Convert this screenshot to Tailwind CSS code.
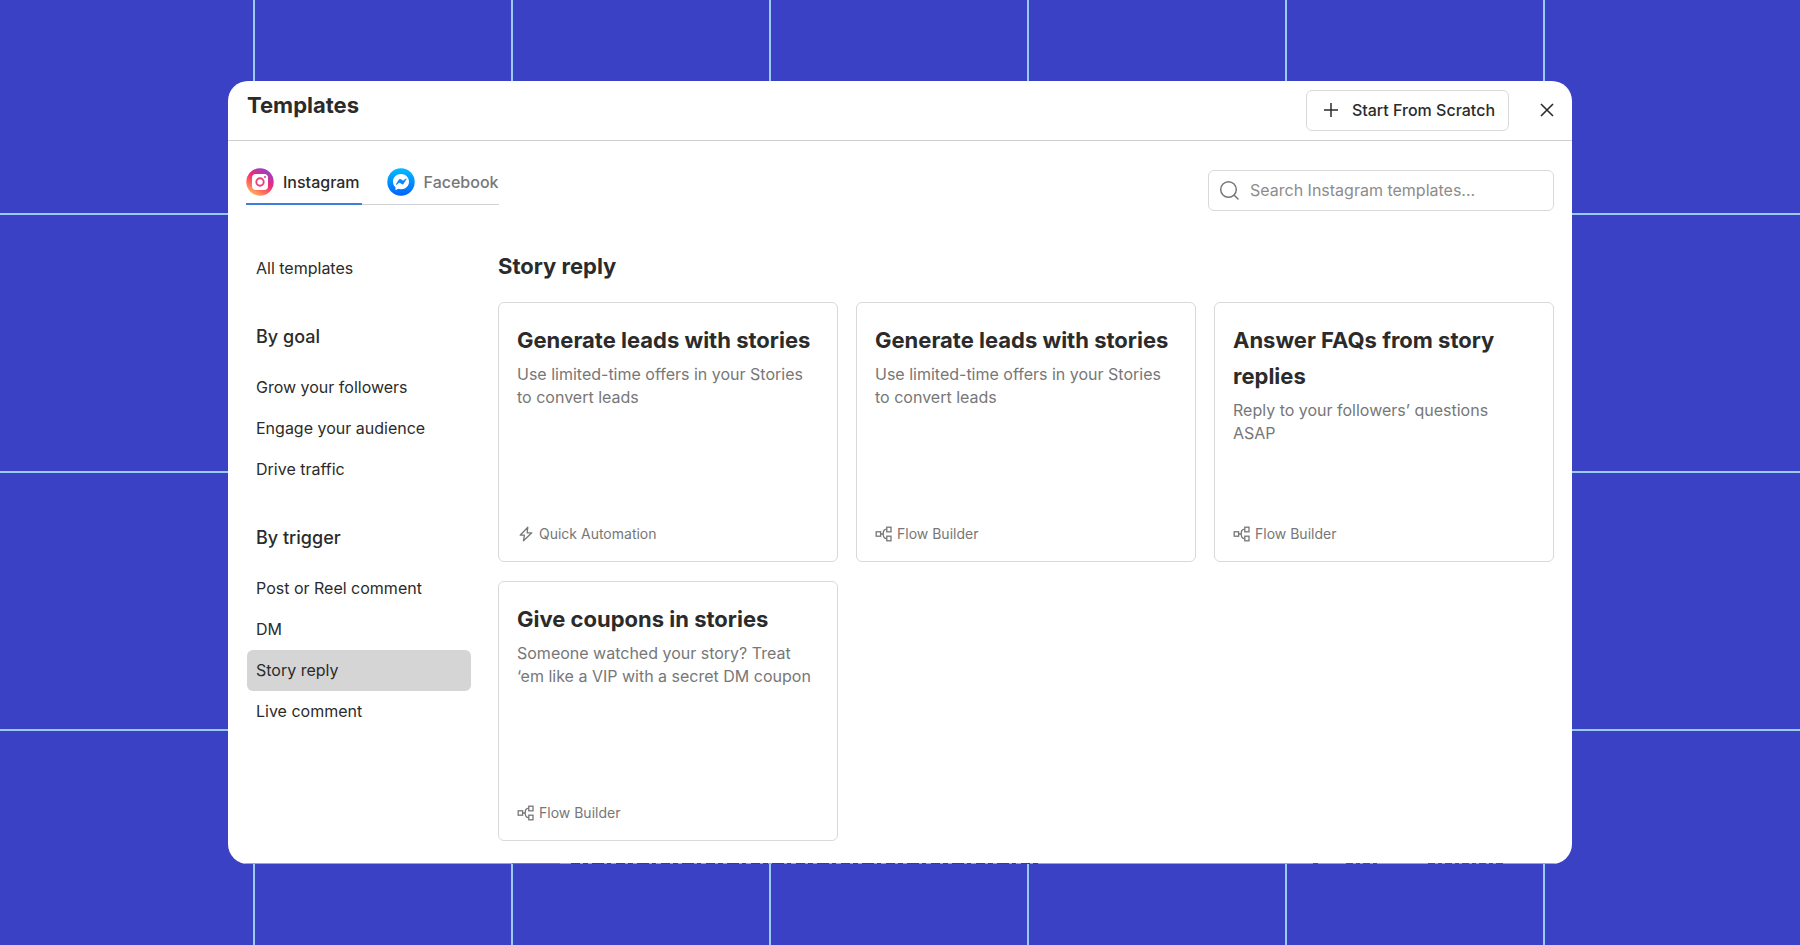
<!DOCTYPE html>
<html lang="en">
<head>
  <meta charset="UTF-8">
  <meta name="viewport" content="width=device-width, initial-scale=1.0">
  <title>Templates</title>
  <script src="https://cdn.jsdelivr.net/npm/@tailwindcss/browser@4"></script>
</head>
<body class="min-h-screen bg-[#3b41c5] bg-[linear-gradient(#98cbf2_2px,transparent_2px),linear-gradient(90deg,#98cbf2_2px,transparent_2px)] bg-[size:258px_258px] bg-[position:0_213px,253px_0] px-[228px] py-[81px] font-['Inter',sans-serif] text-[#2b2b2b]">

  <!-- Shared icon shapes -->
  <svg class="hidden">
    <symbol id="icon-flow" viewBox="0 0 18 16" fill="none" stroke="currentColor" stroke-width="1.3">
      <rect x="1.2" y="5.8" width="4.4" height="4.4" />
      <rect x="11.8" y="1.2" width="4.2" height="4.6" />
      <rect x="11.8" y="10.2" width="4.2" height="4.6" />
      <path d="M5.6 8h2.6M11.8 3.2C9 3.2 8.2 5 8.2 8s.8 4.6 3.6 4.6" />
    </symbol>
    <symbol id="icon-bolt" viewBox="0 0 18 16" fill="none" stroke="currentColor" stroke-width="1.3" stroke-linejoin="round">
      <path d="M10.800 1.200 3.200 9.200h4.200l-.9 5.600 8.300-8h-4.600z" />
    </symbol>
  </svg>

  <div role="dialog" aria-labelledby="dialog-title" class="relative min-h-[783px] overflow-hidden rounded-[20px] bg-white">
    <!-- Header -->
    <header class="flex h-15 items-center justify-between border-b border-[#cfcfd2] pl-[19px] pr-[15px]">
      <h1 id="dialog-title" class="pb-3 text-[22px] leading-9 font-bold">Templates</h1>
      <div class="flex items-center gap-7 pb-px">
        <button type="button" class="flex h-[41px] items-center gap-3 rounded-md border border-[#d9d9d9] px-[13px] text-base font-medium">
          <svg class="size-5" viewBox="0 0 20 20" fill="none" stroke="currentColor" stroke-width="1.5"><path d="M11 3v14M4 10h14" /></svg>
          Start From Scratch
        </button>
        <button type="button" aria-label="Close">
          <svg class="size-5" viewBox="0 0 20 20" fill="none" stroke="currentColor" stroke-width="1.6"><path d="m4 4 12 12M16 4 4 16" /></svg>
        </button>
      </div>
    </header>

    <!-- Channel tabs and search -->
    <div class="flex items-start justify-between px-[18px] pt-[27px]">
      <nav class="flex gap-[25px] border-b border-[#d0d2d6] text-base font-medium">
        <a href="#instagram" class="-mb-px flex items-center gap-[9px] border-b-2 border-[#3f7fdb] pb-[7px]">
          <svg class="size-7" viewBox="0 0 28 28" fill="none">
            <defs>
              <linearGradient id="ig" x1="5" y1="26" x2="20" y2="2" gradientUnits="userSpaceOnUse">
                <stop stop-color="#ffb861" />
                <stop offset=".3" stop-color="#ff6a5c" />
                <stop offset=".6" stop-color="#ee2a7b" />
                <stop offset="1" stop-color="#9a3fc0" />
              </linearGradient>
            </defs>
            <circle cx="14" cy="14" r="13.7" fill="url(#ig)" />
            <rect x="6" y="6" width="16" height="16" rx="4" fill="#fff" />
            <circle cx="14" cy="14" r="3.7" stroke="#ee3f78" stroke-width="1.9" />
            <circle cx="19" cy="9" r="1" fill="#d63b95" />
          </svg>
          <span class="pr-[2px]">Instagram</span>
        </a>
        <a href="#facebook" class="flex items-center gap-[9px] pb-2 text-[#777]">
          <svg class="size-7" viewBox="0 0 28 28">
            <defs>
              <linearGradient id="ms" x1="0" y1="0" x2="0" y2="1">
                <stop stop-color="#00bdff" />
                <stop offset="1" stop-color="#0064ff" />
              </linearGradient>
            </defs>
            <circle cx="14" cy="14" r="13.7" fill="url(#ms)" />
            <path fill="#fff" d="M14 6c-4.600 0-8 3.300-8 7.700 0 2.300 1 4.200 2.500 5.600v2.900l2.700-1.400c.9.3 1.800.4 2.800.4 4.600 0 8-3.300 8-7.500S18.600 6 14 6z" />
            <path fill="#0a86ff" d="m8.900 16.300 3-4.700c.5-.7 1.300-.8 2-.4l1.800 1.400c.2.100.4.100.6 0l2.700-2c.4-.3.800.1.600.5l-3 4.600c-.5.700-1.300.9-2 .4l-1.800-1.400c-.2-.1-.4-.1-.6 0l-2.700 2.100c-.4.300-.8-.1-.6-.5z" />
          </svg>
          Facebook
        </a>
      </nav>
      <label class="mt-[2px] flex h-[41px] w-[346px] items-center gap-[11px] rounded-md border border-[#d9d9d9] px-[10px] pb-px">
        <svg class="size-5 shrink-0 text-[#777]" viewBox="0 0 20 20" fill="none" stroke="currentColor" stroke-width="1.5" stroke-linecap="round"><circle cx="9.500" cy="9.500" r="7.800" /><path d="m15.200 15.200 3.800 3.800" /></svg>
        <input type="search" aria-label="Search templates" placeholder="Search Instagram templates..." class="min-w-0 flex-1 text-base outline-none placeholder:text-[#8c8c8c]">
      </label>
    </div>

    <div class="flex gap-[27px] pl-[19px] pr-[18px] pt-[37px]">
      <!-- Sidebar -->
      <nav class="w-[224px] shrink-0 text-base leading-[41px]">
        <a href="#all" class="block rounded-md px-[9px]">All templates</a>
        <h2 class="mt-[27px] mb-[10px] px-[9px] text-lg leading-[41px] font-medium">By goal</h2>
        <a href="#grow" class="block rounded-md px-[9px]">Grow your followers</a>
        <a href="#engage" class="block rounded-md px-[9px]">Engage your audience</a>
        <a href="#traffic" class="block rounded-md px-[9px]">Drive traffic</a>
        <h2 class="mt-[27px] mb-[10px] px-[9px] text-lg leading-[41px] font-medium">By trigger</h2>
        <a href="#comment" class="block rounded-md px-[9px]">Post or Reel comment</a>
        <a href="#dm" class="block rounded-md px-[9px]">DM</a>
        <a href="#story" aria-current="page" class="block rounded-md bg-[#d5d5d5] px-[9px]">Story reply</a>
        <a href="#live" class="block rounded-md px-[9px]">Live comment</a>
      </nav>

      <!-- Template cards -->
      <main class="flex-1">
        <h2 class="mb-[18px] text-[22px] leading-9 font-bold">Story reply</h2>
        <div class="grid grid-cols-3 gap-x-[18px] gap-y-[19px]">
          <a href="#leads-quick" class="flex h-[260px] flex-col rounded-md border border-[#d9d9d9] px-[18px] pt-[19px] pb-[17px]">
            <h3 class="text-[22px] leading-9 font-bold">Generate leads with stories</h3>
            <p class="mt-[5px] text-base leading-[23px] text-[#777]">Use limited-time offers in your Stories to convert leads</p>
            <span class="mt-auto flex items-center gap-1 text-sm text-[#777]"><svg class="h-4 w-[18px]"><use href="#icon-bolt" /></svg>Quick Automation</span>
          </a>
          <a href="#leads-flow" class="flex h-[260px] flex-col rounded-md border border-[#d9d9d9] px-[18px] pt-[19px] pb-[17px]">
            <h3 class="text-[22px] leading-9 font-bold">Generate leads with stories</h3>
            <p class="mt-[5px] text-base leading-[23px] text-[#777]">Use limited-time offers in your Stories to convert leads</p>
            <span class="mt-auto flex items-center gap-1 text-sm text-[#777]"><svg class="h-4 w-[18px]"><use href="#icon-flow" /></svg>Flow Builder</span>
          </a>
          <a href="#faqs" class="flex h-[260px] flex-col rounded-md border border-[#d9d9d9] px-[18px] pt-[19px] pb-[17px]">
            <h3 class="text-[22px] leading-9 font-bold">Answer FAQs from story replies</h3>
            <p class="mt-[5px] text-base leading-[23px] text-[#777]">Reply to your followers’ questions ASAP</p>
            <span class="mt-auto flex items-center gap-1 text-sm text-[#777]"><svg class="h-4 w-[18px]"><use href="#icon-flow" /></svg>Flow Builder</span>
          </a>
          <a href="#coupons" class="flex h-[260px] flex-col rounded-md border border-[#d9d9d9] px-[18px] pt-[19px] pb-[17px]">
            <h3 class="text-[22px] leading-9 font-bold">Give coupons in stories</h3>
            <p class="mt-[5px] text-base leading-[23px] text-[#777]">Someone watched your story? Treat ‘em like a VIP with a secret DM coupon</p>
            <span class="mt-auto flex items-center gap-1 text-sm text-[#777]"><svg class="h-4 w-[18px]"><use href="#icon-flow" /></svg>Flow Builder</span>
          </a>
        </div>
      </main>
    </div>

    <!-- Sliver of the row that is cut off at the bottom edge -->
    <svg class="absolute bottom-0 left-0 h-px w-full" viewBox="0 0 1344 1" preserveAspectRatio="none" fill="none" aria-hidden="true">
      <path d="M0 .5h1344" stroke="#a4a5bd" />
      <path d="M284 .5h48" stroke="#8f7093" />
      <path d="M343 .5h470" stroke="#3f4168" stroke-dasharray="9 3 5 4 12 3 4 5" />
      <path d="M1085 .5h5M1118 .5h34M1200 .5h78" stroke="#4b4d78" stroke-dasharray="7 3 4 3" />
    </svg>
  </div>
</body>
</html>
